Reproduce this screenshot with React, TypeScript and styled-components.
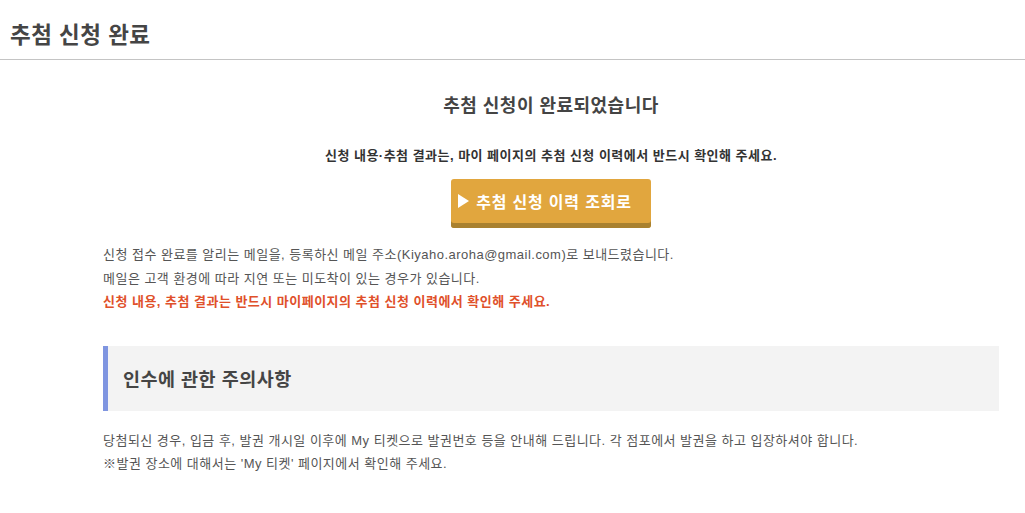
import styled, { createGlobalStyle } from "styled-components";

const GlobalStyle = createGlobalStyle`
  body {
    margin: 0;
    background: #fff;
    font-family: "Liberation Sans", "Noto Sans CJK KR", sans-serif;
    color: #555;
    letter-spacing: 0.03em;
  }
`;

const StyledPage = styled.div`
  width: 100%;
`;

const StyledHeader = styled.header`
  height: 60px;
  border-bottom: 1px solid #c4c4c4;
  display: flex;
  align-items: center;
  padding: 0 10px;
  box-sizing: border-box;
`;

const StyledPageTitle = styled.h1`
  margin: 0 0 -6px;
  font-size: 22.5px;
  font-weight: 700;
  color: #454545;
`;

const StyledMain = styled.main`
  padding: 28px 26px 0 103px;
`;

const StyledCenter = styled.div`
  display: flex;
  flex-direction: column;
  align-items: center;
`;

const StyledDoneTitle = styled.h2`
  margin: 0;
  font-size: 18px;
  font-weight: 700;
  color: #444;
  line-height: 36px;
`;

const StyledNotice = styled.p`
  margin: 23px 0 0;
  font-size: 13px;
  font-weight: 700;
  color: #333;
  line-height: 18px;
`;

const StyledButton = styled.button`
  margin-top: 14px;
  width: 200px;
  height: 49px;
  border: none;
  border-radius: 3px;
  background: #e1a63e;
  box-shadow: inset 0 -5px 0 #a9812f;
  color: #fff;
  font-family: inherit;
  font-size: 16px;
  font-weight: 700;
  letter-spacing: 0.05em;
  display: flex;
  align-items: center;
  justify-content: center;
  gap: 7px;
  padding: 0 12px 5px 0;
  cursor: pointer;
`;

const StyledArrow = styled.span`
  width: 0;
  height: 0;
  border-top: 7px solid transparent;
  border-bottom: 7px solid transparent;
  border-left: 11px solid #fff;
`;

const StyledMessages = styled.div`
  margin-top: 15px;
`;

const StyledLine = styled.p<{ $alert?: boolean }>`
  margin: 0;
  font-size: 13px;
  line-height: 23.5px;
  color: ${(p) => (p.$alert ? "#e0502a" : "#555")};
  font-weight: ${(p) => (p.$alert ? 700 : 400)};
`;

const StyledSectionTitle = styled.h3`
  margin: 32px 0 0;
  height: 65px;
  box-sizing: border-box;
  display: flex;
  align-items: center;
  padding-left: 15px;
  background: #f3f3f3;
  border-left: 5px solid #7f95e0;
  font-size: 18.5px;
  font-weight: 700;
  color: #454545;
`;

const StyledSectionBody = styled.div`
  margin-top: 18px;
`;

export default function App() {
  return (
    <StyledPage>
      <GlobalStyle />
      <StyledHeader>
        <StyledPageTitle>추첨 신청 완료</StyledPageTitle>
      </StyledHeader>

      <StyledMain>
        <StyledCenter>
          <StyledDoneTitle>추첨 신청이 완료되었습니다</StyledDoneTitle>
          <StyledNotice>
            신청 내용·추첨 결과는, 마이 페이지의 추첨 신청 이력에서 반드시 확인해 주세요.
          </StyledNotice>
          <StyledButton>
            <StyledArrow />
            추첨 신청 이력 조회로
          </StyledButton>
        </StyledCenter>

        <StyledMessages>
          <StyledLine>
            신청 접수 완료를 알리는 메일을, 등록하신 메일 주소(Kiyaho.aroha@gmail.com)로 보내드렸습니다.
          </StyledLine>
          <StyledLine>메일은 고객 환경에 따라 지연 또는 미도착이 있는 경우가 있습니다.</StyledLine>
          <StyledLine $alert>
            신청 내용, 추첨 결과는 반드시 마이페이지의 추첨 신청 이력에서 확인해 주세요.
          </StyledLine>
        </StyledMessages>

        <StyledSectionTitle>인수에 관한 주의사항</StyledSectionTitle>
        <StyledSectionBody>
          <StyledLine>
            당첨되신 경우, 입금 후, 발권 개시일 이후에 My 티켓으로 발권번호 등을 안내해 드립니다. 각 점포에서 발권을 하고 입장하셔야 합니다.
          </StyledLine>
          <StyledLine>※발권 장소에 대해서는 'My 티켓' 페이지에서 확인해 주세요.</StyledLine>
        </StyledSectionBody>
      </StyledMain>
    </StyledPage>
  );
}
